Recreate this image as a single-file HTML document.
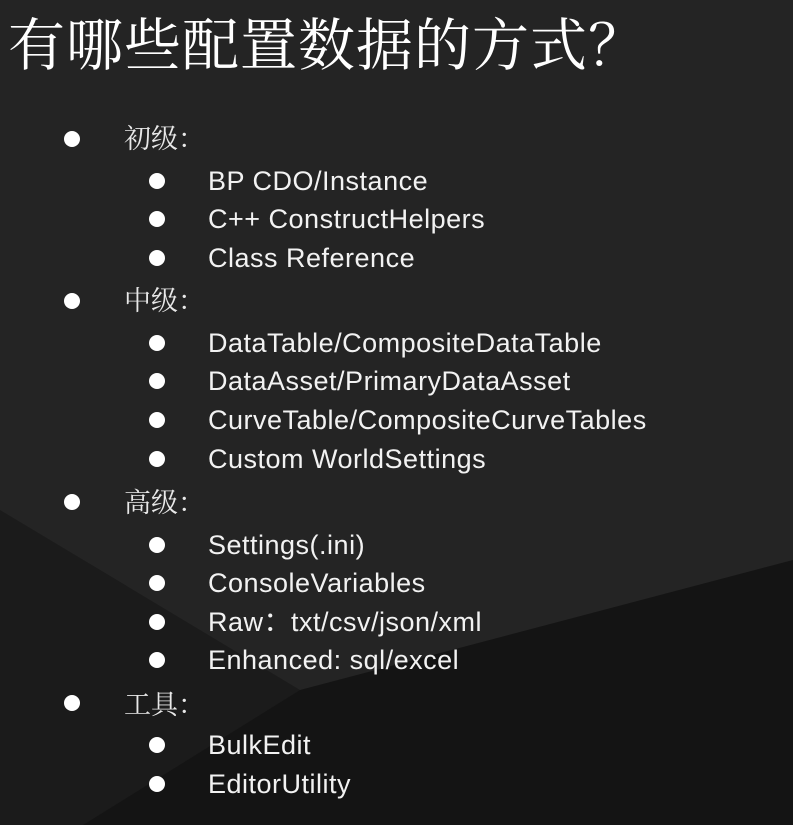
<!DOCTYPE html>
<html><head><meta charset="utf-8"><style>
html,body{margin:0;padding:0}
body{width:793px;height:825px;position:relative;overflow:hidden;background:#242424;font-family:"Liberation Sans","Noto Sans CJK SC",sans-serif;color:#f2f2f2}
svg.bg{position:absolute;left:0;top:0}
.t{position:absolute;left:8px;top:8px;font-family:"Noto Serif CJK SC",serif;font-size:57px;line-height:66px;color:#fff;white-space:nowrap;letter-spacing:1px}
.l{position:absolute;white-space:nowrap;line-height:30px}
.l1{left:124px;font-family:"Noto Serif CJK SC",serif;font-size:27px;color:#e8e8e8}
.l2{left:208px;font-size:27px;letter-spacing:0.5px}
.d{position:absolute;width:16px;height:16px;border-radius:50%;background:#fff}
</style></head><body>
<svg class="bg" width="793" height="825"><polygon points="0,510 300,690 83,825 0,825" fill="#1b1b1b"/><polygon points="793,560 793,825 83,825 300,690" fill="#141414"/></svg>
<div class="t">有哪些配置数据的方式？</div>

<div class="d" style="left:64px;top:131px"></div><div class="l l1" style="top:122px">初级：</div>
<div class="d" style="left:149px;top:173px"></div><div class="l l2" style="top:166px">BP CDO/Instance</div>
<div class="d" style="left:149px;top:211px"></div><div class="l l2" style="top:204px">C++ ConstructHelpers</div>
<div class="d" style="left:149px;top:250px"></div><div class="l l2" style="top:243px">Class Reference</div>
<div class="d" style="left:64px;top:293px"></div><div class="l l1" style="top:284px">中级：</div>
<div class="d" style="left:149px;top:335px"></div><div class="l l2" style="top:328px">DataTable/CompositeDataTable</div>
<div class="d" style="left:149px;top:373px"></div><div class="l l2" style="top:366px">DataAsset/PrimaryDataAsset</div>
<div class="d" style="left:149px;top:412px"></div><div class="l l2" style="top:405px">CurveTable/CompositeCurveTables</div>
<div class="d" style="left:149px;top:451px"></div><div class="l l2" style="top:444px">Custom WorldSettings</div>
<div class="d" style="left:64px;top:494px"></div><div class="l l1" style="top:486px">高级：</div>
<div class="d" style="left:149px;top:537px"></div><div class="l l2" style="top:530px">Settings(.ini)</div>
<div class="d" style="left:149px;top:575px"></div><div class="l l2" style="top:568px">ConsoleVariables</div>
<div class="d" style="left:149px;top:614px"></div><div class="l l2" style="top:607px">Raw：txt/csv/json/xml</div>
<div class="d" style="left:149px;top:652px"></div><div class="l l2" style="top:645px">Enhanced: sql/excel</div>
<div class="d" style="left:64px;top:695px"></div><div class="l l1" style="top:688px">工具：</div>
<div class="d" style="left:149px;top:737px"></div><div class="l l2" style="top:730px">BulkEdit</div>
<div class="d" style="left:149px;top:776px"></div><div class="l l2" style="top:769px">EditorUtility</div>
</body></html>
